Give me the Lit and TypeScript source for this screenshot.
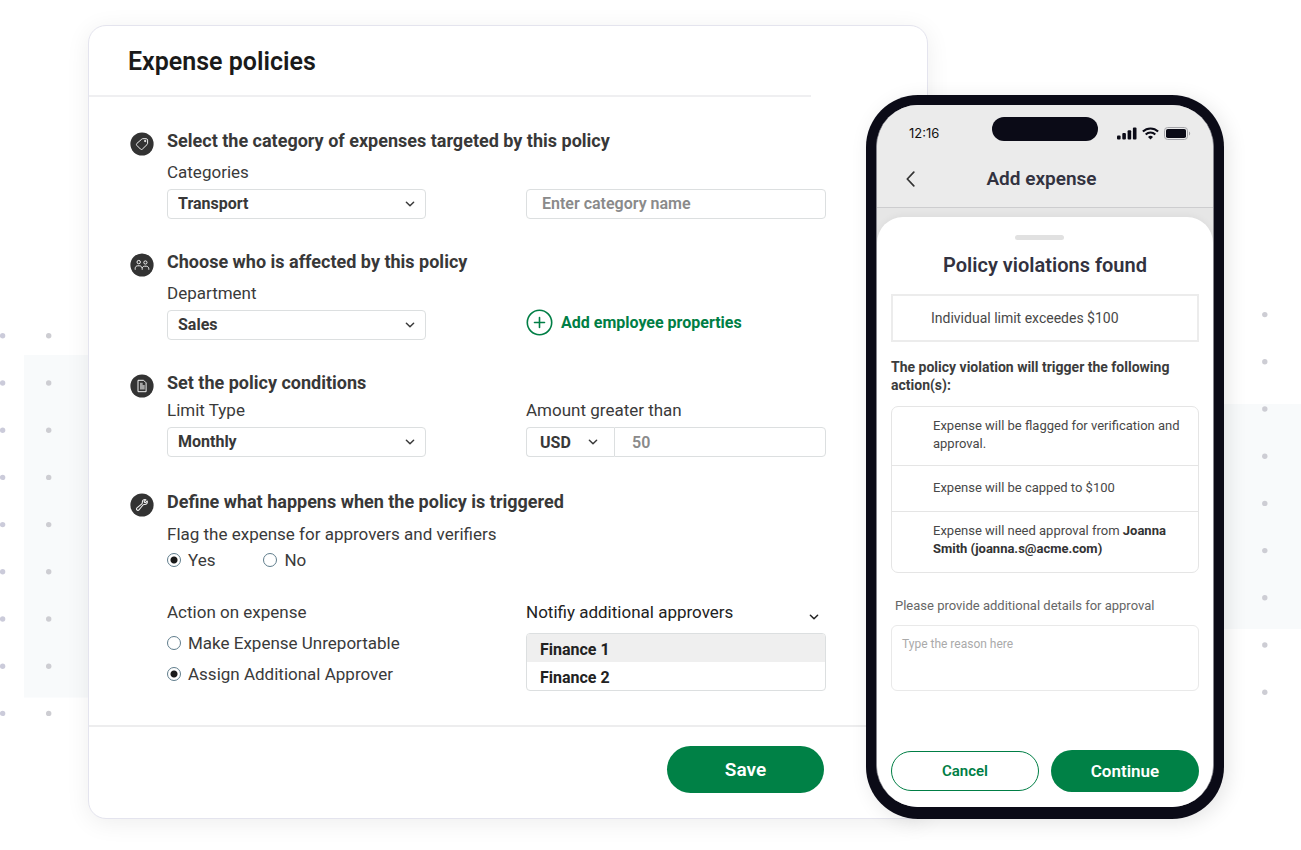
import { LitElement, html, svg, css } from "lit";
import { customElement } from "lit/decorators.js";

const base = css`
  *,
  *::before,
  *::after {
    box-sizing: border-box;
  }
  h1, h2, h3, p, ul, fieldset {
    margin: 0;
    padding: 0;
    border: 0;
    font-weight: inherit;
    list-style: none;
  }
  button, input, select, textarea {
    font-family: inherit;
    margin: 0;
    border-radius: 4px;
    outline-offset: 2px;
  }
  button {
    cursor: pointer;
  }
  svg {
    display: block;
    flex: none;
  }
`;

const chevron = html`<svg class="chevron" width="10" height="10" viewBox="0 0 10 10" fill="none" stroke="currentColor" stroke-width="1.5" stroke-linecap="round" stroke-linejoin="round" aria-hidden="true"><path d="M1.4 3.2 5 6.7 8.6 3.2" /></svg>`;

const glyphs = {
  tag: svg`<path d="M12.8 6.7h3.4c.8 0 1.4.6 1.4 1.4v3.2c0 .5-.2.9-.5 1.2l-4.7 4.6c-.5.5-1.4.5-1.9 0l-3.700-3.700c-.5-.5-.5-1.300 0-1.900l5-4.400c.3-.3.6-.4 1-.4z" /><circle cx="15.200" cy="9" r=".7" fill="currentColor" />`,
  people: svg`<circle cx="8.700" cy="9.100" r="1.700" /><circle cx="15.400" cy="9.500" r="1.600" /><path d="M5.200 16.700v-1.300c0-1.500 1.100-2.600 2.500-2.600h1.900c1.300 0 2.300 1 2.300 2.300M12.200 16.700v-1c0-1.400 1-2.500 2.400-2.500h1.700c1.400 0 2.500 1.100 2.500 2.500v1" />`,
  page: svg`<path d="M8 6.300h5.600L16.100 8.800V17.700H8z" /><path d="M10 8.800h2.700v2.100h2v4.500H10z" fill="currentColor" fill-opacity=".6" stroke="none" />`,
  wrench: svg`<g transform="translate(5.200 5.200) scale(.56)" stroke-width="1.900"><path d="M21.750 6.750a4.500 4.500 0 0 1-4.884 4.484c-1.076-.091-2.264.071-2.950.904l-7.152 8.684a2.548 2.548 0 1 1-3.586-3.586l8.684-7.152c.833-.686.995-1.874.904-2.950a4.500 4.500 0 0 1 6.336-4.486l-3.276 3.276a3.004 3.004 0 0 0 2.250 2.250l3.276-3.276c.256.565.398 1.192.398 1.852Z" /></g>`,
};

const badge = (name: keyof typeof glyphs) => html`
  <svg class="badge" width="24" height="24" viewBox="0 0 24 24" fill="none" stroke="currentColor" stroke-width="1" stroke-linejoin="round" aria-hidden="true">
    <circle cx="12" cy="12" r="11.600" fill="#333" stroke="none" />${glyphs[name]}
  </svg>`;

@customElement("policy-card")
export class PolicyCard extends LitElement {
  static styles = [
    base,
    css`
      :host {
        display: flex;
        flex-direction: column;
        background: #fff;
        border: 1px solid #e4e4ee;
        border-radius: 18px;
        box-shadow: 0 4px 24px rgba(0, 0, 0, 0.07);
        color: #3a3a3a;
        font-size: 17px;
        line-height: 20px;
      }
      .head {
        padding: 20px 39px 18px;
      }
      .head h1 {
        font-size: 25px;
        line-height: 31px;
        font-weight: 600;
        color: #1a1a1a;
      }
      .rule {
        height: 2px;
        margin-right: 116px;
        background: #efeff1;
      }
      .body {
        flex: 1;
        display: flex;
        flex-direction: column;
        gap: 31px;
        padding: 32px 101px 34px 41px;
      }
      .step {
        display: grid;
        grid-template-columns: 24px 1fr;
        column-gap: 13px;
      }
      .step:last-of-type {
        padding-top: 2px;
      }
      .badge {
        margin-top: 3px;
        color: #f2f2f2;
      }
      h2 {
        font-size: 18px;
        line-height: 24px;
        font-weight: 700;
        color: #383838;
      }
      .cols {
        display: grid;
        grid-template-columns: 259fr 300fr;
        column-gap: 100px;
        align-items: end;
        margin-top: 9px;
      }
      .tight {
        margin-top: 5px;
      }
      .field {
        display: flex;
        flex-direction: column;
        gap: 7px;
      }
      .pick {
        display: grid;
        align-items: center;
      }
      .pick select,
      .pick .chevron {
        grid-area: 1 / 1;
      }
      .pick .chevron {
        justify-self: end;
        margin-right: 11px;
        pointer-events: none;
      }
      select,
      input[type="text"] {
        appearance: none;
        width: 100%;
        height: 30px;
        padding: 0 10px 2px;
        border: 1px solid #dcdfe0;
        background: #fff;
        color: #383838;
        font-size: 16px;
        font-weight: 700;
      }
      input[type="text"] {
        padding: 0 15px 2px;
        font-weight: 600;
      }
      input::placeholder {
        color: #8a8a8a;
        opacity: 1;
      }
      .money {
        display: grid;
        grid-template-columns: 88px 1fr;
      }
      .money select {
        padding: 0 13px;
        border-right: 0;
        border-radius: 4px 0 0 4px;
      }
      .money .chevron {
        margin-right: 16px;
      }
      .money input[type="text"] {
        border-radius: 0 4px 4px 0;
        padding: 0 17px;
      }
      .add {
        display: flex;
        align-items: center;
        gap: 8px;
        justify-self: start;
        padding: 0 0 4px;
        border: 0;
        background: none;
        color: #007e45;
        font-size: 16px;
        font-weight: 700;
      }
      .choices {
        display: flex;
        gap: 48px;
        margin-top: 6px;
      }
      .choices label,
      .stack label {
        display: flex;
        align-items: center;
        gap: 7px;
      }
      input[type="radio"] {
        appearance: none;
        width: 14px;
        height: 14px;
        border: 1px solid #5f7d8c;
        border-radius: 50%;
        background: #fff;
      }
      input[type="radio"]:checked {
        background: radial-gradient(circle, #1a1a1a 3px, #fff 4px);
      }
      .legend {
        margin-top: 10px;
      }
      .outcome {
        align-items: start;
        margin-top: 32px;
      }
      .stack {
        display: flex;
        flex-direction: column;
        gap: 11px;
      }
      .notify {
        display: flex;
        justify-content: space-between;
        color: #222;
      }
      .toggle {
        padding: 5px;
        margin: 5px 2px -5px 0;
        border: 0;
        background: none;
        color: #222;
      }
      .list {
        height: 58px;
        padding: 0;
        overflow: hidden;
      }
      .list option {
        padding: 6px 13px 3px;
        color: #222;
        font-size: 16px;
        font-weight: 700;
      }
      .list option:checked {
        background: #efefef linear-gradient(#efefef, #efefef);
        color: #222;
      }
      .foot {
        display: flex;
        justify-content: flex-end;
        padding: 19px 103px 25px;
        border-top: 2px solid #ededee;
      }
      .save {
        width: 157px;
        height: 47px;
        border: 0;
        border-radius: 24px;
        background: #008146;
        color: #fff;
        font-size: 19px;
        font-weight: 600;
      }
    `,
  ];

  private pick(id: string, value: string) {
    return html`<div class="pick">
      <select id=${id}><option>${value}</option></select>${chevron}
    </div>`;
  }

  render() {
    return html`
      <header class="head"><h1>Expense policies</h1></header>
      <div class="rule"></div>
      <div class="body">
        <section class="step">
          ${badge("tag")}
          <div>
            <h2>Select the category of expenses targeted by this policy</h2>
            <div class="cols">
              <div class="field">
                <label for="category">Categories</label>
                ${this.pick("category", "Transport")}
              </div>
              <input type="text" placeholder="Enter category name" aria-label="Category name" />
            </div>
          </div>
        </section>

        <section class="step">
          ${badge("people")}
          <div>
            <h2>Choose who is affected by this policy</h2>
            <div class="cols">
              <div class="field">
                <label for="department">Department</label>
                ${this.pick("department", "Sales")}
              </div>
              <button class="add" type="button">
                <svg width="27" height="27" viewBox="0 0 27 27" fill="none" stroke="currentColor" stroke-width="1.600" stroke-linecap="round" aria-hidden="true">
                  <circle cx="13.500" cy="13.500" r="12.200" /><path d="M8.500 13.500h10M13.500 8.500v10" />
                </svg>
                Add employee properties
              </button>
            </div>
          </div>
        </section>

        <section class="step">
          ${badge("page")}
          <div>
            <h2>Set the policy conditions</h2>
            <div class="cols tight">
              <div class="field">
                <label for="limit">Limit Type</label>
                ${this.pick("limit", "Monthly")}
              </div>
              <div class="field">
                <label for="amount">Amount greater than</label>
                <div class="money">
                  <div class="pick">
                    <select aria-label="Currency"><option>USD</option></select>${chevron}
                  </div>
                  <input id="amount" type="text" placeholder="50" />
                </div>
              </div>
            </div>
          </div>
        </section>

        <section class="step">
          ${badge("wrench")}
          <div>
            <h2>Define what happens when the policy is triggered</h2>
            <div role="radiogroup" aria-labelledby="flag">
              <p class="legend" id="flag">Flag the expense for approvers and verifiers</p>
              <div class="choices">
                <label><input type="radio" name="flag" checked />Yes</label>
                <label><input type="radio" name="flag" />No</label>
              </div>
            </div>
            <div class="cols outcome">
              <div class="stack" role="radiogroup" aria-labelledby="action">
                <p id="action">Action on expense</p>
                <label><input type="radio" name="action" />Make Expense Unreportable</label>
                <label><input type="radio" name="action" checked />Assign Additional Approver</label>
              </div>
              <div class="stack">
                <div class="notify">
                  <label for="approvers">Notifiy additional approvers</label>
                  <button class="toggle" type="button" aria-label="Toggle approvers">${chevron}</button>
                </div>
                <select class="list" id="approvers" size="2">
                  <option selected>Finance 1</option>
                  <option>Finance 2</option>
                </select>
              </div>
            </div>
          </div>
        </section>
      </div>
      <footer class="foot"><button class="save" type="button">Save</button></footer>
    `;
  }
}

@customElement("violation-phone")
export class ViolationPhone extends LitElement {
  static styles = [
    base,
    css`
      :host {
        display: flex;
        padding: 10px 10px 12px;
        border-radius: 52px;
        background: #0b0b17;
        box-shadow: 4px 4px 20px rgba(0, 0, 0, 0.1);
        color: #484848;
        font-size: 13px;
        line-height: 18px;
      }
      .screen {
        flex: 1;
        display: flex;
        flex-direction: column;
        overflow: hidden;
        border: 1px solid #85858d;
        border-radius: 42px;
        border-width: 0 1px;
        background: #e6e6e6;
      }
      .top {
        background: #ebebeb;
        border-bottom: 1px solid #cdcdcf;
      }
      .status {
        display: grid;
        grid-template-columns: 83px 106px 1fr;
        align-items: center;
        padding: 11px 22px 0 32px;
        color: #111;
      }
      .status time {
        font-family: Inter, sans-serif;
        font-size: 13px;
        padding-top: 8px;
      }
      .island {
        height: 24px;
        border-radius: 12px;
        background: #0b0b17;
      }
      .signals {
        display: flex;
        align-items: center;
        justify-content: flex-end;
        gap: 5px;
        padding-top: 8px;
      }
      .nav {
        display: grid;
        grid-template-columns: 40px 1fr 40px;
        align-items: center;
        padding: 25px 20px 16px 13px;
      }
      .back {
        display: grid;
        place-items: center;
        height: 24px;
        padding: 0;
        border: 0;
        background: none;
        color: #333;
      }
      .nav h2,
      .sheet h3 {
        text-align: center;
        color: #32323f;
        font-size: 19px;
        line-height: 24px;
        font-weight: 600;
      }
      .sheet {
        flex: 1;
        display: flex;
        flex-direction: column;
        margin-top: 9px;
        padding: 18px 14px 15px;
        border-radius: 26px 26px 0 0;
        background: #fff;
        box-shadow: 0 -2px 6px rgba(0, 0, 0, 0.04);
      }
      .handle {
        align-self: center;
        width: 49px;
        height: 5px;
        margin-right: 12px;
        border-radius: 3px;
        background: #e1e1e1;
      }
      .sheet h3 {
        margin-top: 13px;
        font-size: 20px;
      }
      .limit {
        margin-top: 17px;
        padding: 13px 38px;
        border: 2px solid #ececec;
        font-size: 14px;
      }
      .lead {
        margin-top: 16px;
        color: #3c3c3c;
        font-size: 14px;
        font-weight: 700;
      }
      .actions {
        margin-top: 12px;
        padding-bottom: 2px;
        border: 1px solid #e5e5e5;
        border-radius: 7px;
      }
      .actions li {
        min-height: 46px;
        align-content: center;
        padding: 10px 16px 12px 41px;
      }
      .actions li + li {
        border-top: 1px solid #e5e5e5;
      }
      .actions b {
        color: #333;
        font-weight: 700;
      }
      .details {
        display: flex;
        flex-direction: column;
        gap: 10px;
        margin-top: 24px;
        color: #666;
      }
      .details label {
        padding-left: 4px;
      }
      textarea {
        display: block;
        height: 66px;
        padding: 9px 10px;
        resize: none;
        border: 1px solid #e9e9e9;
        border-radius: 6px;
        font-size: 12px;
        line-height: 18px;
      }
      textarea::placeholder {
        color: #aaa;
        opacity: 1;
      }
      .buttons {
        display: grid;
        grid-template-columns: 1fr 1fr;
        align-items: center;
        gap: 12px;
        margin-top: auto;
      }
      .buttons button {
        height: 42px;
        padding: 0;
        border: 0;
        border-radius: 21px;
        background: #008146;
        color: #fff;
        font-size: 17px;
        font-weight: 600;
      }
      .buttons .ghost {
        height: 40px;
        border: 1px solid #007e45;
        background: #fff;
        color: #007e45;
        font-size: 15px;
      }
    `,
  ];

  render() {
    return html`
      <div class="screen">
        <div class="top">
          <div class="status">
            <time>12:16</time>
            <div class="island"></div>
            <div class="signals">
              <svg width="20" height="13" viewBox="0 0 20 13" fill="#0b0b17" role="img" aria-label="Signal">
                <rect x="0" y="8.500" width="3.600" height="4" rx="1" /><rect x="5.300" y="6" width="3.600" height="6.500" rx="1" />
                <rect x="10.600" y="3.300" width="3.600" height="9.200" rx="1" /><rect x="15.900" y=".5" width="3.600" height="12" rx="1" />
              </svg>
              <svg width="17" height="13" viewBox="0 0 17 13" fill="none" stroke="#0b0b17" stroke-width="2.100" role="img" aria-label="Wi-Fi">
                <path d="M.9 4.500a11 11 0 0 1 15.200 0M3.700 7.400a7 7 0 0 1 9.600 0" />
                <path d="M8.500 12.500 6 9.900a3.600 3.600 0 0 1 5 0z" fill="#0b0b17" stroke="none" />
              </svg>
              <svg width="27" height="13" viewBox="0 0 27 13" role="img" aria-label="Battery">
                <rect x=".5" y=".5" width="23" height="12" rx="3.200" fill="none" stroke="#a3a3a8" />
                <rect x="2" y="2" width="20" height="9" rx="1.800" fill="#0b0b17" />
                <path d="M25 4.500c1.600.6 1.600 3.400 0 4z" fill="#a3a3a8" />
              </svg>
            </div>
          </div>
          <div class="nav">
            <button class="back" type="button" aria-label="Back">
              <svg width="9" height="16" viewBox="0 0 9 16" fill="none" stroke="currentColor" stroke-width="1.700" stroke-linecap="round" stroke-linejoin="round" aria-hidden="true"><path d="M7.800 1.200 1.300 8l6.500 6.800" /></svg>
            </button>
            <h2>Add expense</h2>
          </div>
        </div>
        <div class="sheet">
          <div class="handle"></div>
          <h3>Policy violations found</h3>
          <p class="limit">Individual limit exceedes $100</p>
          <p class="lead">The policy violation will trigger the following action(s):</p>
          <ul class="actions">
            <li>Expense will be flagged for verification and approval.</li>
            <li>Expense will be capped to $100</li>
            <li>Expense will need approval from <b>Joanna Smith (joanna.s@acme.com)</b></li>
          </ul>
          <div class="details">
            <label for="reason">Please provide additional details for approval</label>
            <textarea id="reason" placeholder="Type the reason here"></textarea>
          </div>
          <div class="buttons">
            <button class="ghost" type="button">Cancel</button>
            <button type="button">Continue</button>
          </div>
        </div>
      </div>
    `;
  }
}

const dots = (x: number, top: number, fill: string) =>
  Array.from({ length: 9 }, (_, i) => svg`<circle cx=${x} cy=${top + i * 47.2} r="2.700" fill=${fill} />`);

@customElement("app-root")
export class AppRoot extends LitElement {
  static styles = [
    base,
    css`
      :host {
        display: block;
        position: relative;
        min-height: 100vh;
        background: #fff;
        font-family: Roboto, "Liberation Sans", sans-serif;
      }
      .scene {
        display: flex;
        padding: 25px 77px 31px 88px;
      }
      policy-card {
        position: relative;
        flex: 1;
      }
      violation-phone {
        position: relative;
        width: 358px;
        margin: 70px 0 0 -62px;
      }
      .decor {
        position: absolute;
        top: 0;
      }
      .left {
        left: 0;
      }
      .right {
        right: 0;
      }
    `,
  ];

  render() {
    return html`
      <svg class="decor left" width="120" height="800" aria-hidden="true">
        <rect x="24" y="355" width="96" height="342.500" fill="#f8fafb" />
        ${dots(2.6, 335.8, "#cbcbda")} ${dots(48.7, 335.8, "#cdcdd2")}
      </svg>
      <svg class="decor right" width="120" height="800" aria-hidden="true">
        <rect x="0" y="404" width="120" height="225" fill="#f8fafb" />
        ${dots(83.8, 314.6, "#cdcdd4")}
      </svg>
      <main class="scene">
        <policy-card></policy-card>
        <violation-phone></violation-phone>
      </main>
    `;
  }
}
